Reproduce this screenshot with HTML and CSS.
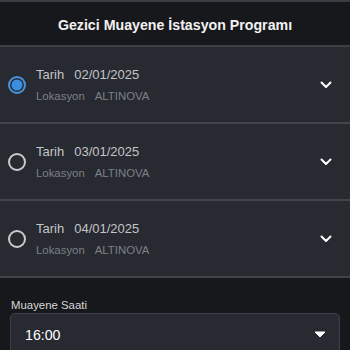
FILE: index.html
```html
<!DOCTYPE html>
<html lang="tr">
<head>
<meta charset="utf-8">
<link rel="stylesheet" href="styles.css">
</head>
<body>
<div class="app">
  <header class="header">Gezici Muayene İstasyon Programı</header>
  <ul class="list">
    <li class="item">
      <span class="radio checked"></span>
      <div class="info">
        <div class="row1"><span>Tarih</span><span>02/01/2025</span></div>
        <div class="row2"><span>Lokasyon</span><span>ALTINOVA</span></div>
      </div>
      <svg class="chev" viewBox="0 0 12 8" width="12" height="8"><path d="M1.5 1.5 L6 6 L10.5 1.5" fill="none" stroke="#fff" stroke-width="2" stroke-linecap="round" stroke-linejoin="round"/></svg>
    </li>
    <li class="item">
      <span class="radio"></span>
      <div class="info">
        <div class="row1"><span>Tarih</span><span>03/01/2025</span></div>
        <div class="row2"><span>Lokasyon</span><span>ALTINOVA</span></div>
      </div>
      <svg class="chev" viewBox="0 0 12 8" width="12" height="8"><path d="M1.5 1.5 L6 6 L10.5 1.5" fill="none" stroke="#fff" stroke-width="2" stroke-linecap="round" stroke-linejoin="round"/></svg>
    </li>
    <li class="item">
      <span class="radio"></span>
      <div class="info">
        <div class="row1"><span>Tarih</span><span>04/01/2025</span></div>
        <div class="row2"><span>Lokasyon</span><span>ALTINOVA</span></div>
      </div>
      <svg class="chev" viewBox="0 0 12 8" width="12" height="8"><path d="M1.5 1.5 L6 6 L10.5 1.5" fill="none" stroke="#fff" stroke-width="2" stroke-linecap="round" stroke-linejoin="round"/></svg>
    </li>
  </ul>
  <section class="field">
    <label class="label">Muayene Saati</label>
    <div class="select">
      <span>16:00</span>
      <svg class="caret" viewBox="0 0 12 7" width="12" height="7"><path d="M1 1 L11 1 L6 6 Z" fill="#fff" stroke="#fff" stroke-width="1" stroke-linejoin="round"/></svg>
    </div>
  </section>
</div>
</body>
</html>
```

FILE: styles.css
```css
* { box-sizing: border-box; }
html, body {
  margin: 0;
  padding: 0;
  background: #17181c;
  font-family: "Liberation Sans", Arial, sans-serif;
  color: #fff;
}
.app {
  width: 350px;
  height: 350px;
  overflow: hidden;
  border-top: 2px solid #3b3d42;
}
.header {
  height: 45px;
  display: flex;
  align-items: center;
  justify-content: center;
  padding-top: 2px;
  font-size: 14.2px;
  font-weight: bold;
  color: #f2f2f2;
  background: #17181c;
  border-bottom: 2px solid #3d3f45;
}
.list {
  list-style: none;
  margin: 0;
  padding: 0;
}
.item {
  height: 77px;
  display: flex;
  align-items: center;
  background: #272a31;
  border-bottom: 2px solid #41444b;
  padding: 0 18px 0 8px;
}
.radio {
  width: 18px;
  height: 18px;
  border-radius: 50%;
  border: 2px solid #c9cacd;
  flex: none;
}
.radio.checked {
  border: 2px solid #4a90d9;
  background: #272a31;
  box-shadow: inset 0 0 0 1.5px #272a31, inset 0 0 0 20px #3c8ee0;
}
.info {
  flex: 1;
  margin-left: 10px;
  display: flex;
  flex-direction: column;
  gap: 8px;
}
.row1 {
  display: flex;
  gap: 10px;
  font-size: 13px;
  color: #c3c5c9;
}
.row2 {
  display: flex;
  gap: 10px;
  font-size: 11.4px;
  color: #7d8087;
}
.chev { flex: none; }
.field {
  padding: 21px 10px 0 10px;
}
.label {
  display: block;
  font-size: 11.4px;
  color: #d6d7d9;
  margin-left: 1px;
  margin-bottom: 2px;
}
.select {
  height: 44px;
  background: #272a31;
  border: 1px solid #3d4047;
  border-radius: 5px;
  display: flex;
  align-items: center;
  justify-content: space-between;
  padding: 0 13px 0 14px;
  font-size: 14.2px;
  color: #fff;
}
.caret { margin-top: -2px; }
```
